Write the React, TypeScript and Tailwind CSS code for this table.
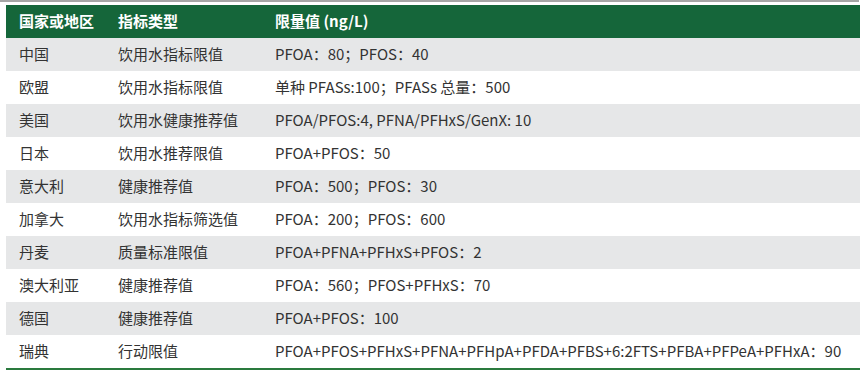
import React from "react";

const rows: [string, string, string][] = [
  ["中国", "饮用水指标限值", "PFOA：80；PFOS：40"],
  ["欧盟", "饮用水指标限值", "单种 PFASs:100；PFASs 总量：500"],
  ["美国", "饮用水健康推荐值", "PFOA/PFOS:4, PFNA/PFHxS/GenX: 10"],
  ["日本", "饮用水推荐限值", "PFOA+PFOS：50"],
  ["意大利", "健康推荐值", "PFOA：500；PFOS：30"],
  ["加拿大", "饮用水指标筛选值", "PFOA：200；PFOS：600"],
  ["丹麦", "质量标准限值", "PFOA+PFNA+PFHxS+PFOS：2"],
  ["澳大利亚", "健康推荐值", "PFOA：560；PFOS+PFHxS：70"],
  ["德国", "健康推荐值", "PFOA+PFOS：100"],
  ["瑞典", "行动限值", "PFOA+PFOS+PFHxS+PFNA+PFHpA+PFDA+PFBS+6:2FTS+PFBA+PFPeA+PFHxA：90"],
];

export default function App() {
  return (
    <div
      className="w-[865px] h-[377px] bg-white"
      style={{ fontFamily: '"Noto Sans CJK SC", "Noto Sans", sans-serif' }}
    >
      <div className="h-[2px] w-[859px] bg-[#a6a6a6]" />
      <div className="pl-[6px] pt-[3px] w-[860px]">
        <div className="flex h-[33px] items-center bg-[#15663a] text-white font-bold text-[15px]">
          <div className="w-[112px] pl-[13px]">国家或地区</div>
          <div className="w-[157px] pl-[0px]">指标类型</div>
          <div className="flex-1">限量值 (ng/L)</div>
        </div>
        {rows.map((r, i) => (
          <div
            key={i}
            className={`flex h-[33px] items-center text-[15px] text-[#333333] ${
              i % 2 === 0 ? "bg-[#e6e7e8]" : "bg-white"
            }`}
          >
            <div className="w-[112px] pl-[13px]">{r[0]}</div>
            <div className="w-[157px]">{r[1]}</div>
            <div className="flex-1 whitespace-nowrap">{r[2]}</div>
          </div>
        ))}
        <div className="h-[2px] bg-[#2a7a3e]" />
      </div>
    </div>
  );
}
